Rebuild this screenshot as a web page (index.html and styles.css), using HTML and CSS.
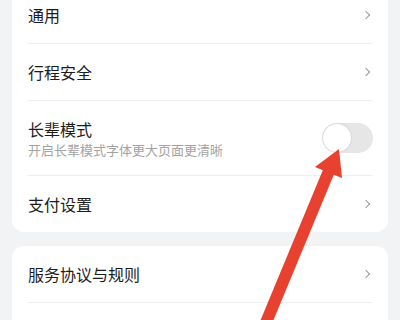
FILE: index.html
```html
<!DOCTYPE html>
<html lang="zh">
<head>
<meta charset="utf-8">
<link rel="stylesheet" href="styles.css">
</head>
<body>
<div class="page">
  <div class="card first">
    <div class="row"><span class="title">通用</span><span class="chev"></span></div>
    <div class="row"><span class="title">行程安全</span><span class="chev"></span></div>
    <div class="row tall">
      <div class="texts">
        <span class="title">长辈模式</span>
        <span class="sub">开启长辈模式字体更大页面更清晰</span>
      </div>
      <span class="toggle"><span class="knob"></span></span>
    </div>
    <div class="row last"><span class="title">支付设置</span><span class="chev"></span></div>
  </div>
  <div class="card">
    <div class="row"><span class="title">服务协议与规则</span><span class="chev"></span></div>
    <div class="row"></div>
  </div>
</div>
<svg class="arrow" width="400" height="320" viewBox="0 0 400 320">
  <polygon fill="#e8412f" points="259.5,322.7 322.8,170.2 315,167 339,149 342,178 333.8,174.8 270.5,327.3"/>
</svg>
</body>
</html>
```
FILE: styles.css
```css
html, body {
  margin: 0;
  padding: 0;
  background: #f2f3f5;
  width: 400px;
  height: 320px;
  overflow: hidden;
  font-family: "Noto Sans CJK SC", "Noto Sans", sans-serif;
}
.page {
  position: relative;
  margin-top: -13px;
  padding: 0 12px;
  display: flex;
  flex-direction: column;
  gap: 14px;
}
.card {
  background: #fff;
  border-radius: 12px;
  padding: 0 16px;
}
.card.first {
  border-radius: 0 0 12px 12px;
}
.row {
  height: 56px;
  display: flex;
  align-items: center;
  justify-content: space-between;
  border-bottom: 1px solid #eeeeee;
}
.row.last {
  border-bottom: none;
}
.row.tall {
  height: 74px;
}
.title {
  font-size: 16px;
  color: #1c1c1c;
  line-height: 22px;
}
.texts {
  display: flex;
  flex-direction: column;
  gap: 0;
  margin-top: 2px;
}
.sub {
  font-size: 13px;
  color: #a3a3a3;
  line-height: 20px;
}
.chev {
  width: 5px;
  height: 5px;
  border-top: 1.5px solid #9a9a9a;
  border-right: 1.5px solid #9a9a9a;
  transform: rotate(45deg);
  margin-right: 3px;
}
.toggle {
  width: 51px;
  height: 30px;
  border-radius: 15px;
  background: #e6e6e6;
  display: flex;
  align-items: center;
  padding: 0 1px;
  box-sizing: border-box;
  margin-right: -1px;
}
.knob {
  width: 28px;
  height: 28px;
  border-radius: 50%;
  background: #fff;
  box-shadow: 0 0 2px rgba(0,0,0,0.18);
}
.arrow {
  position: absolute;
  left: 0;
  top: 0;
}
```
